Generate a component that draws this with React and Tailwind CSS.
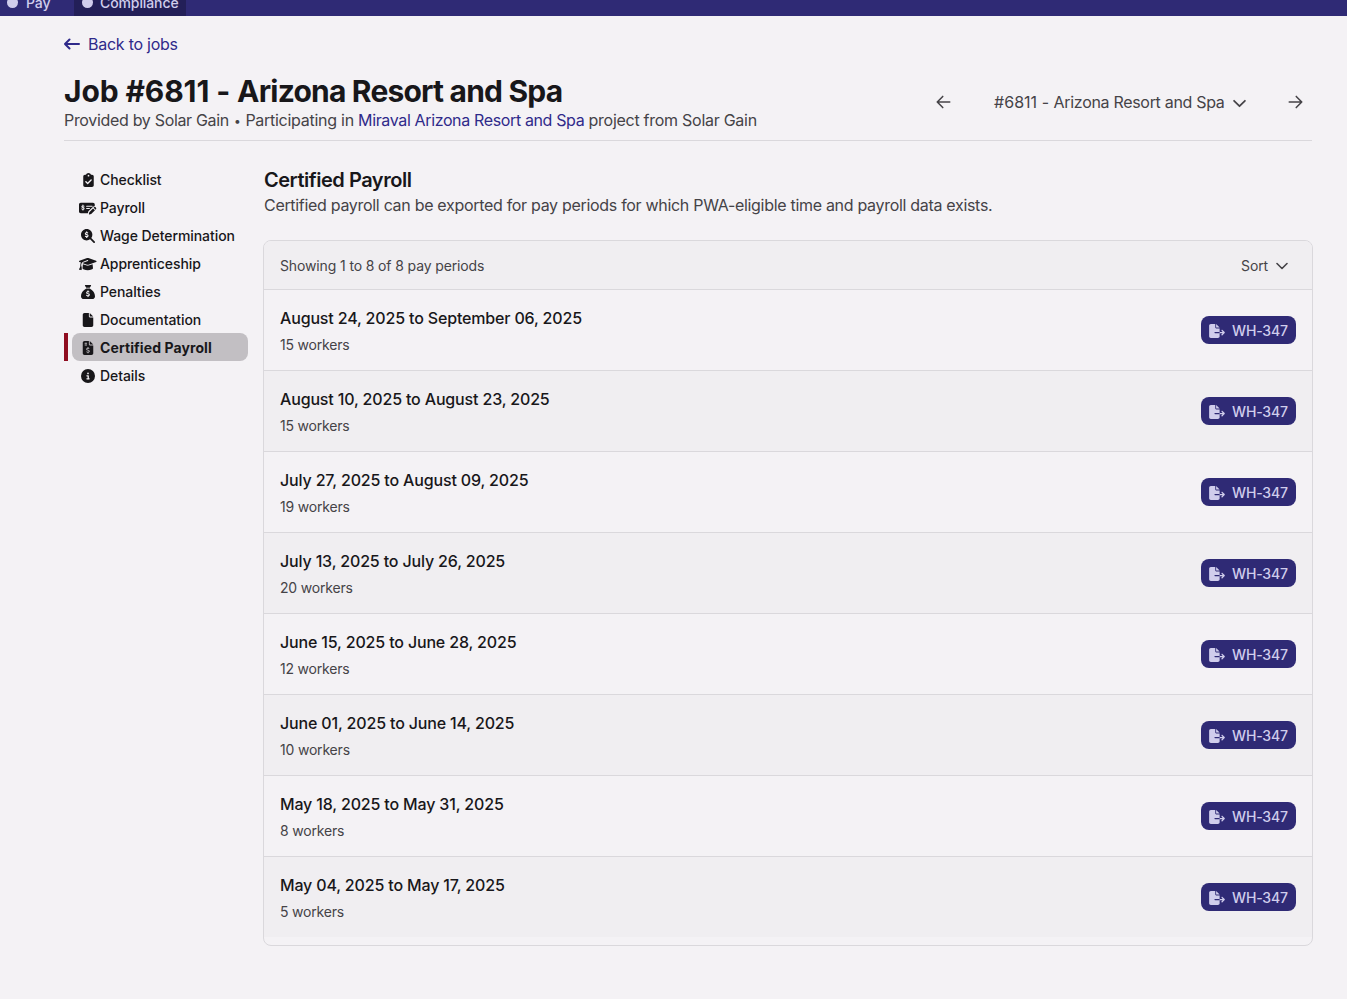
import React from 'react';
import {
  FaCircleInfo,
  FaFile,
  FaFileExport,
  FaFileInvoiceDollar,
  FaGraduationCap,
  FaMagnifyingGlassDollar,
  FaSackDollar,
} from 'react-icons/fa6';

function ClipboardCheck() {
  return (
    <svg viewBox="0 0 384 512" className="h-3.5 w-[11px]" fill="currentColor">
      <path
        fillRule="evenodd"
        d="M192 0c-42 0-77 27-91 64H64C29 64 0 93 0 128v320c0 35 29 64 64 64h256c35 0 64-29 64-64V128c0-35-29-64-64-64h-37C269 27 234 0 192 0zm0 64a32 32 0 1 1 0 64 32 32 0 1 1 0-64zm113 209L177 401c-9 9-25 9-34 0l-64-64c-22-23 11-56 34-34l47 47 111-111c23-22 56 11 34 34z"
      />
    </svg>
  );
}

function MoneyCheckPen() {
  return (
    <svg viewBox="0 0 640 512" className="h-3.5 w-[17.5px]" fill="none">
      <path
        fill="currentColor"
        d="M64 64C29 64 0 93 0 128v256c0 35 29 64 64 64h261l18-70 153-153c20-20 47-30 80-29v-68c0-35-29-64-64-64H64z"
      />
      <path
        className="stroke-[#f4f2f5]"
        strokeWidth="40"
        strokeLinecap="round"
        d="M182 192c-22-14-74-16-76 16-2 40 80 22 78 66-2 34-52 32-78 12M144 152v26M144 300v26M280 192h200M280 272h100"
      />
      <path fill="currentColor" d="M384 399l129-129 71 71-129 129c-4 4-9 7-15 8l-60 15c-12 3-22-7-19-19l15-60c1-6 4-11 8-15zM536 247l14-14c16-16 41-16 57 0l14 14c16 16 16 41 0 57l-14 14z" />
    </svg>
  );
}

function BackArrow({ className }) {
  return (
    <svg viewBox="0 0 16 12" className={className} fill="none" stroke="currentColor" strokeWidth="2" strokeLinecap="round" strokeLinejoin="round">
      <path d="M15 6H1M5.5 1.5L1 6l4.5 4.5" />
    </svg>
  );
}

function ArrowLeft({ className }) {
  return (
    <svg viewBox="0 0 448 512" className={className} fill="none" stroke="currentColor" strokeWidth="50" strokeLinecap="round" strokeLinejoin="round">
      <path d="M424 256H24M200 78L24 256l176 178" />
    </svg>
  );
}

function ArrowRight({ className }) {
  return (
    <svg viewBox="0 0 448 512" className={className} fill="none" stroke="currentColor" strokeWidth="50" strokeLinecap="round" strokeLinejoin="round">
      <path d="M24 256h400M248 78l176 178-176 178" />
    </svg>
  );
}

function ChevronDown({ className }) {
  return (
    <svg viewBox="0 0 12 8" className={className} fill="none" stroke="currentColor" strokeWidth="1.6" strokeLinecap="round" strokeLinejoin="round">
      <path d="M1 1.5l5 5 5-5" />
    </svg>
  );
}

const navItems = [
  { label: 'Checklist', icon: <ClipboardCheck /> },
  { label: 'Payroll', icon: <MoneyCheckPen /> },
  { label: 'Wage Determination', icon: <FaMagnifyingGlassDollar /> },
  { label: 'Apprenticeship', icon: <FaGraduationCap className="h-3.5 w-[17.5px]" /> },
  { label: 'Penalties', icon: <FaSackDollar /> },
  { label: 'Documentation', icon: <FaFile /> },
  { label: 'Certified Payroll', icon: <FaFileInvoiceDollar />, active: true },
  { label: 'Details', icon: <FaCircleInfo /> },
];

const periods = [
  ['August 24, 2025 to September 06, 2025', 15],
  ['August 10, 2025 to August 23, 2025', 15],
  ['July 27, 2025 to August 09, 2025', 19],
  ['July 13, 2025 to July 26, 2025', 20],
  ['June 15, 2025 to June 28, 2025', 12],
  ['June 01, 2025 to June 14, 2025', 10],
  ['May 18, 2025 to May 31, 2025', 8],
  ['May 04, 2025 to May 17, 2025', 5],
];

function TopBar() {
  return (
    <nav className="flex h-4 items-end overflow-hidden bg-[#2f2a75] text-sm font-medium tracking-[-0.1px] text-[#d0cdec]">
      <div className="flex h-8 w-[74px] shrink-0 items-center pt-[5px] pl-[7px]">
        <span className="mr-2 h-[11px] w-[11px] rounded-full bg-current" />
        <span className="pt-px">Pay</span>
      </div>
      <div className="flex h-8 w-28 shrink-0 items-center bg-[#231f58] pt-[5px] pl-2">
        <span className="mr-[7px] h-[11px] w-[11px] rounded-full bg-current" />
        <span className="pt-px">Compliance</span>
      </div>
    </nav>
  );
}

function SideNav() {
  return (
    <ul className="w-[184px] shrink-0 pt-6 text-sm font-medium tracking-[-0.07px] text-[#18171a]">
      {navItems.map(({ label, icon, active }) => (
        <li key={label} className={`flex h-7 border-l-4 pl-1 ${active ? 'border-[#8f0d20]' : 'border-transparent'}`}>
          <a className={`flex w-full items-center whitespace-nowrap rounded-lg pl-[7px] ${active ? 'bg-[#c2bfc3] font-bold tracking-[0.09px]' : ''}`}>
            <span className="mr-[3px] flex w-[18px] shrink-0 justify-center pt-px">{icon}</span>
            <span className="pt-px">{label}</span>
          </a>
        </li>
      ))}
    </ul>
  );
}

function PeriodRow({ title, workers }) {
  return (
    <li className="flex h-[81px] items-center justify-between border-t border-[#dad8dc] px-4 odd:bg-[#f4f2f5] even:bg-[#f0eef1]">
      <div>
        <h3 className="text-base font-medium tracking-[-0.16px] text-[#18171a]">{title}</h3>
        <p className="mt-[5px] text-sm leading-5 tracking-[-0.19px] text-[#454347]">{workers} workers</p>
      </div>
      <button className="flex h-7 w-[95px] items-center rounded-lg bg-[#2f2a75] pl-2 text-sm font-medium tracking-[-0.15px] text-[#d0cdec]">
        <FaFileExport className="mt-px mr-[7px] h-3.5 w-4" />
        <span className="whitespace-nowrap pt-0.5">WH-347</span>
      </button>
    </li>
  );
}

export default function App() {
  return (
    <div className="min-h-[999px] bg-[#f4f2f5] font-['Inter',sans-serif] text-[#454347]">
      <TopBar />
      <main className="mr-[35px] ml-16">
        <a className="flex h-14 items-center text-base tracking-[-0.25px] text-[#2f2a8a]">
          <BackArrow className="mr-2 h-3 w-4" />
          <span>Back to jobs</span>
        </a>
        <header className="flex h-[69px] justify-between border-b border-[#dad8dc]">
          <div className="whitespace-nowrap">
            <h1 className="mt-px text-[30px] leading-9 font-bold tracking-[-0.8px] text-[#18171a]">
              <span className="tracking-[-0.12px]">Job #6811 - </span>Arizona Resort and Spa
            </h1>
            <p className="text-base leading-[22px] tracking-[-0.27px]">
              <span className="tracking-[-0.32px]">Provided by Solar Gain </span>
              <span className="inline-block w-2 text-center align-[1px] text-xs leading-none">•</span> Participating in{' '}
              <a className="tracking-[-0.36px] text-[#2f2a8a]">Miraval Arizona Resort and Spa</a> project from Solar Gain
            </p>
          </div>
          <div className="mr-[9.5px] flex h-[60px] items-center">
            <ArrowLeft className="mr-[43px] h-4 w-[15px]" />
            <span className="whitespace-nowrap tracking-[-0.31px]">
              <span className="tracking-[0.03px]">#6811 - </span>Arizona Resort and Spa
            </span>
            <ChevronDown className="mt-0.5 mr-[42px] ml-2 h-[9px] w-[13px]" />
            <ArrowRight className="h-4 w-[15px]" />
          </div>
        </header>
        <div className="flex">
          <SideNav />
          <section className="ml-[15px] min-w-0 grow">
            <h2 className="mt-[25px] pl-px text-xl leading-7 font-semibold tracking-[-0.47px] text-[#18171a]">Certified Payroll</h2>
            <p className="-mt-px pl-px text-base tracking-[-0.305px]">Certified payroll can be exported for pay periods for which PWA-eligible time and payroll data exists.</p>
            <div className="mt-[23px] -mr-px overflow-hidden rounded-lg border border-[#dad8dc] pb-2">
              <div className="flex h-12 items-center justify-between bg-[#f0eef1] px-4 pt-0.5 text-sm tracking-[-0.13px]">
                <span>Showing 1 to 8 of 8 pay periods</span>
                <span className="flex items-center pr-2">
                  Sort
                  <ChevronDown className="ml-2 h-2 w-3" />
                </span>
              </div>
              <ul>
                {periods.map(([title, workers]) => (
                  <PeriodRow key={title} title={title} workers={workers} />
                ))}
              </ul>
            </div>
          </section>
        </div>
      </main>
    </div>
  );
}
